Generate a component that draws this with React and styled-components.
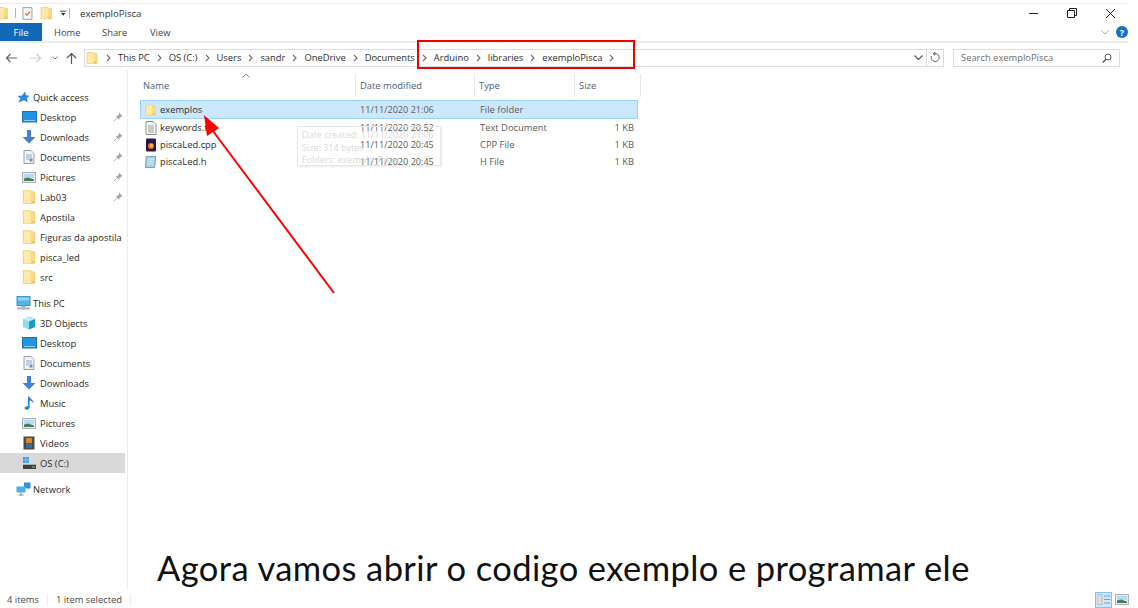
import React from "react";
import styled, { createGlobalStyle } from "styled-components";

const Global = createGlobalStyle`
  html, body { margin: 0; padding: 0; background: #fff; }
  body { font-family: "Open Sans", "Noto Sans", sans-serif; color: #2b2b2b; }
  #root { width: 1138px; height: 608px; overflow: hidden; }
`;

const Page = styled.div`
  position: relative;
  width: 1138px;
  height: 608px;
  display: flex;
  flex-direction: column;
  overflow: hidden;
  background: #fff;
`;
const Window = styled.div`
  width: 1128px;
  height: 608px;
  padding-top: 3px;
  box-sizing: border-box;
  display: flex;
  flex-direction: column;
`;
const TitleBar = styled.div`
  height: 19px;
  box-sizing: border-box;
  border-top: 1px solid #ececec;
  display: flex;
  align-items: center;
  font-size: 9.6px;
  color: #333;
`;
const QuickIcons = styled.div`
  display: flex;
  align-items: center;
  width: 75px;
  margin-left: -5px;
  gap: 6px;
  flex: none;
`;
const VBar = styled.span`
  width: 1px;
  height: 10px;
  background: #b5b5b5;
`;
const QuickCaret = styled.svg`
  margin-right: -3px;
`;
const TitleText = styled.span`
  margin-left: 10px;
  flex: 1;
`;
const WinButtons = styled.div`
  display: flex;
  gap: 28px;
  margin-right: 12px;
  align-items: center;
`;
const Ribbon = styled.div`
  height: 20px;
  margin-top: 1px;
  box-sizing: border-box;
  display: flex;
  align-items: stretch;
  border-bottom: 2px solid #ececec;
  font-size: 9.4px;
  color: #444;
`;
const FileTab = styled.div`
  width: 42px;
  background: #1368b8;
  color: #fff;
  display: flex;
  align-items: center;
  justify-content: center;
  font-weight: 500;
`;
const Tab = styled.div`
  display: flex;
  align-items: center;
  width: ${p => p.$w}px;
  padding-left: ${p => p.$pl}px;
  box-sizing: border-box;
`;
const RibbonRight = styled.div`
  margin-left: auto;
  display: flex;
  align-items: center;
  gap: 7px;
`;
const Help = styled.span`
  width: 12px;
  height: 12px;
  border-radius: 50%;
  background: #1272c8;
  color: #fff;
  font-size: 9px;
  font-weight: 700;
  display: flex;
  align-items: center;
  justify-content: center;
`;
const NavRow = styled.div`
  height: 27px;
  display: flex;
  align-items: center;
  padding-top: 2px;
  box-sizing: border-box;
`;
const NavButtons = styled.div`
  width: 84px;
  flex: none;
  display: flex;
  align-items: center;
  padding-left: 5px;
  box-sizing: border-box;
  gap: 11px;
`;
const DropCaret = styled.svg`
  margin: 0 -3px 0 -1px;
`;
const AddressBar = styled.div`
  width: 860px;
  flex: none;
  height: 18px;
  border: 1px solid #dcdcdc;
  box-sizing: border-box;
  display: flex;
  align-items: center;
  font-size: 9.4px;
  color: #2e2e2e;
`;
const Crumb = styled.span`
  margin-left: 7px;
  white-space: nowrap;
`;
const Chevron = styled.span`
  margin-left: 7px;
  display: inline-flex;
`;
const AddressEnd = styled.div`
  margin-left: auto;
  display: flex;
  align-items: center;
  height: 100%;
  gap: 3px;
  padding-right: 3px;
`;
const Divider = styled.span`
  width: 1px;
  height: 100%;
  background: #dcdcdc;
`;
const Search = styled.div`
  margin-left: 9px;
  width: 167px;
  height: 18px;
  border: 1px solid #dcdcdc;
  box-sizing: border-box;
  display: flex;
  align-items: center;
  justify-content: space-between;
  padding: 0 7px;
  font-size: 9.4px;
  color: #6d6d6d;
`;
const Main = styled.div`
  flex: 1;
  display: flex;
  min-height: 0;
`;
const Sidebar = styled.nav`
  width: 127px;
  flex: none;
  border-right: 1px solid #ececec;
  padding-top: 17px;
  font-size: 9.4px;
  color: #2a2a2a;
`;
const NavItem = styled.div`
  height: 20px;
  display: flex;
  align-items: center;
  position: relative;
  white-space: nowrap;
  padding-left: ${p => (p.$top ? 15 : 21)}px;
  margin-top: ${p => p.$gap || 0}px;
  background: ${p => (p.$active ? "#d9d9d9" : "transparent")};
  width: 125px;
  box-sizing: border-box;
`;
const NavIcon = styled.span`
  width: 16px;
  height: 16px;
  flex: none;
  margin-right: ${p => (p.$top ? 2 : 3)}px;
  display: flex;
  align-items: center;
  justify-content: center;
`;
const Pin = styled.span`
  position: absolute;
  right: 2px;
  top: 5px;
  display: flex;
`;
const Content = styled.section`
  flex: 1;
  padding: 3px 0 0 12px;
  position: relative;
`;
const SortCaret = styled.span`
  position: absolute;
  left: 114px;
  top: 3px;
  display: flex;
`;
const Header = styled.div`
  display: flex;
  height: 27px;
  padding: 1px 0 3px;
  box-sizing: border-box;
  font-size: 9.4px;
  color: #4c607a;
`;
const HeadCell = styled.div`
  width: ${p => p.$w}px;
  padding-left: ${p => p.$pl ?? 4}px;
  box-sizing: border-box;
  border-right: 1px solid #e8e8e8;
  display: flex;
  align-items: center;
`;
const FileRow = styled.div`
  width: 498px;
  height: ${p => p.$h}px;
  display: flex;
  align-items: center;
  box-sizing: border-box;
  font-size: 9.4px;
  color: #2e2e2e;
  background: ${p => (p.$sel ? "#cce8ff" : "transparent")};
  border: 1px solid ${p => (p.$sel ? "#99d1ff" : "transparent")};
`;
const FileName = styled.div`
  width: 219px;
  display: flex;
  align-items: center;
  padding-left: 3px;
  box-sizing: border-box;
  gap: 3px;
`;
const FileIcon = styled.span`
  width: 13px;
  height: 14px;
  flex: none;
  display: flex;
  align-items: center;
  justify-content: center;
`;
const DateCell = styled.div`
  width: 120px;
  font-size: 9.1px;
  color: #5c5c5c;
`;
const TypeCell = styled.div`
  width: 108px;
  color: #5c5c5c;
`;
const SizeCell = styled.div`
  width: 46px;
  text-align: right;
  color: #5c5c5c;
`;
const Status = styled.div`
  height: 18px;
  padding: 1px 0 0 7px;
  box-sizing: border-box;
  display: flex;
  align-items: center;
  font-size: 9.4px;
  color: #4a4a4a;
`;
const StatusSep = styled.span`
  width: 1px;
  height: 12px;
  background: #ececec;
  margin: 0 8px;
`;
const ViewIcons = styled.div`
  margin-left: auto;
  display: flex;
  align-items: center;
  gap: 3px;
  margin-right: -1px;
`;
const DetailsBtn = styled.span`
  width: 17px;
  height: 16px;
  background: #cce8ff;
  border: 1px solid #7cc4f5;
  box-sizing: border-box;
  display: flex;
  align-items: center;
  justify-content: center;
`;
const Tooltip = styled.div`
  position: absolute;
  left: 297px;
  top: 126px;
  width: 144px;
  height: 40px;
  box-sizing: border-box;
  border: 1px solid #e6e6e6;
  box-shadow: 1px 1px 2px rgba(0,0,0,.08);
  padding: 2px 4px;
  font-size: 9px;
  line-height: 12.5px;
  color: #dadada;
  white-space: nowrap;
  overflow: hidden;
`;
const RedBox = styled.div`
  position: absolute;
  left: 417px;
  top: 40px;
  width: 218px;
  height: 29px;
  box-sizing: border-box;
  border: 2px solid #f00000;
`;
const ArrowLayer = styled.svg`
  position: absolute;
  left: 195px;
  top: 110px;
`;
const Caption = styled.div`
  position: absolute;
  left: 157px;
  top: 546px;
  font-family: Lato, "Open Sans", sans-serif;
  font-size: 34.5px;
  letter-spacing: 0.4px;
  line-height: 44px;
  color: #111;
  white-space: nowrap;
`;

const Folder = ({ size = 16 }) => (
  <svg width={size} height={size} viewBox="0 0 14 14">
    <path d="M2 1.5h6.500l0 1H11.500a.5.5 0 0 1 .5.5v9.500H2z" fill="#fbdc86" stroke="#e7c363" strokeWidth=".6" />
    <path d="M2.500 2h6v9.500h3.200v.8H2.500z" fill="#fde9a9" />
    <rect x="9" y="10.500" width="3" height="2" fill="#eec75f" />
  </svg>
);
const DesktopIcon = () => (
  <svg width="15" height="12" viewBox="0 0 15 12">
    <rect x=".5" y=".5" width="14" height="10.500" fill="#1f93e6" stroke="#1872bd" />
    <path d="M2 9.500h11" stroke="#8fd0f8" />
  </svg>
);
const DownIcon = () => (
  <svg width="14" height="14" viewBox="0 0 14 14">
    <path d="M5 0h4v7h4.500L7 13.500.5 7H5z" fill="#3c83d3" />
  </svg>
);
const DocIcon = () => (
  <svg width="12" height="14" viewBox="0 0 12 14">
    <path d="M1 .5h7l3 3v10H1z" fill="#f2f3f5" stroke="#9a9fa6" />
    <path d="M3 5h6M3 7h6M3 9h3" stroke="#7eb3dc" />
    <rect x="6.500" y="8.500" width="3" height="3" fill="#7f8c9a" />
  </svg>
);
const PicIcon = () => (
  <svg width="14" height="11" viewBox="0 0 14 11">
    <rect x=".5" y=".5" width="13" height="10" fill="#e8edf1" stroke="#aab1b8" />
    <rect x="2" y="2" width="10" height="4" fill="#b9d9f1" />
    <path d="M2 9V6.500l4-1 6 2V9z" fill="#3f7e60" />
  </svg>
);
const PinIcon = () => (
  <svg width="10" height="10" viewBox="0 0 10 10">
    <path d="M6 .5l3.500 3.500-1.200.4-2 2 0 1.600L2.500 4.200l1.700-.1 1.900-2z" fill="#a2a6ab" />
    <path d="M3.600 6.400L.8 9.200" stroke="#a2a6ab" />
  </svg>
);
const StarIcon = () => (
  <svg width="13" height="12" viewBox="0 0 13 12">
    <path d="M8 .5l1 3.700 3.500.5-2.600 2.500.8 4.300L7 9.300 1.400 11.500l2-4L.5 5l4.600-.4z" fill="#2a8ae0" />
  </svg>
);
const PcIcon = () => (
  <svg width="15" height="14" viewBox="0 0 15 14">
    <rect x="1" y=".5" width="13" height="9" fill="#4db5ee" stroke="#3d95c9" />
    <rect x="2" y="1.500" width="11" height="3" fill="#8fd6f8" />
    <rect x="5.500" y="9.500" width="4" height="2" fill="#9aa8b2" />
    <rect x="1" y="11.500" width="13" height="2" fill="#a7b3bb" />
  </svg>
);
const CubeIcon = () => (
  <svg width="14" height="14" viewBox="0 0 14 14">
    <path d="M7 .5l6 2.500v8l-6 2.500z" fill="#1b9ac2" />
    <path d="M7 .5L1 3v8l6 2.500z" fill="#8edcec" />
    <path d="M7 .5l6 2.500-6 2.500L1 3z" fill="#c0eef6" />
  </svg>
);
const MusicIcon = () => (
  <svg width="11" height="14" viewBox="0 0 11 14">
    <path d="M4 .5h1.400c.3 2.500 4.600 3.400 4.100 7-.6-1.800-2.500-2.800-3.900-3.100V11.200c0 1.500-1.300 2.500-3 2.500-1.200 0-2-.6-2-1.500 0-1.200 1.500-2.200 3.400-2.100z" fill="#1f86e0" />
  </svg>
);
const VideoIcon = () => (
  <svg width="12" height="14" viewBox="0 0 12 14">
    <rect x=".5" y=".5" width="11" height="13" fill="#4a4a4a" />
    <rect x="3" y="2" width="6" height="5" fill="#d9882f" />
    <rect x="3" y="7.500" width="6" height="4.500" fill="#3b6aa8" />
  </svg>
);
const DriveIcon = () => (
  <svg width="15" height="14" viewBox="0 0 15 14">
    <rect x="1" y="1" width="2.700" height="2.700" fill="#2ba3e6" />
    <rect x="4.200" y="1" width="2.700" height="2.700" fill="#2ba3e6" />
    <rect x="1" y="4.200" width="2.700" height="2.700" fill="#2ba3e6" />
    <rect x="4.200" y="4.200" width="2.700" height="2.700" fill="#2ba3e6" />
    <rect x="1" y="9" width="13" height="4" fill="#3a3f42" />
    <rect x="1" y="8" width="13" height="1" fill="#a8adb0" />
    <rect x="10" y="10.500" width="3" height="1" fill="#74d66a" />
  </svg>
);
const NetIcon = () => (
  <svg width="15" height="14" viewBox="0 0 15 14">
    <rect x="8" y=".5" width="6.500" height="6" fill="#2f93da" />
    <rect x=".5" y="4.500" width="9" height="6" fill="#4db0ea" />
    <path d="M5 10.500v2.500M2.500 13h5" stroke="#7a8a96" />
  </svg>
);
const TextFile = () => (
  <svg width="12" height="14" viewBox="0 0 12 14">
    <path d="M1 .5h7l3 3v10H1z" fill="#fafafa" stroke="#8c8c8c" />
    <path d="M3 5h6M3 7h6M3 9h6M3 11h6" stroke="#9a9a9a" />
  </svg>
);
const CppFile = () => (
  <svg width="12" height="14" viewBox="0 0 12 14">
    <rect x="1" y=".5" width="10" height="13" rx="1" fill="#2b1648" />
    <circle cx="6" cy="8" r="3" fill="#f3702d" />
    <circle cx="6.500" cy="7.500" r="1.500" fill="#f8c93a" />
  </svg>
);
const HFile = () => (
  <svg width="14" height="14" viewBox="0 0 14 14">
    <path d="M2.500 1h10l-1 12H1.500z" fill="#a9d3e4" stroke="#6f97a8" />
    <path d="M4 4h7M4 6.500h6.500M3.500 9h7" stroke="#d8eef6" />
  </svg>
);
const Chev = ({ color = "#6d6d6d" }) => (
  <svg width="5" height="8" viewBox="0 0 5 8">
    <path d="M1 1l3 3-3 3" fill="none" stroke={color} strokeWidth="1.100" />
  </svg>
);

const crumbs = ["This PC", "OS (C:)", "Users", "sandr", "OneDrive", "Documents", "Arduino", "libraries", "exemploPisca"];

const quick = [
  ["Desktop", <DesktopIcon />, true],
  ["Downloads", <DownIcon />, true],
  ["Documents", <DocIcon />, true],
  ["Pictures", <PicIcon />, true],
  ["Lab03", <Folder />, true],
  ["Apostila", <Folder />],
  ["Figuras da apostila", <Folder />],
  ["pisca_led", <Folder />],
  ["src", <Folder />],
];
const pc = [
  ["3D Objects", <CubeIcon />],
  ["Desktop", <DesktopIcon />],
  ["Documents", <DocIcon />],
  ["Downloads", <DownIcon />],
  ["Music", <MusicIcon />],
  ["Pictures", <PicIcon />],
  ["Videos", <VideoIcon />],
  ["OS (C:)", <DriveIcon />, false, true],
];
const files = [
  ["exemplos", <Folder />, "11/11/2020 21:06", "File folder", "", 19, true],
  ["keywords.txt", <TextFile />, "11/11/2020 20:52", "Text Document", "1 KB", 17],
  ["piscaLed.cpp", <CppFile />, "11/11/2020 20:45", "CPP File", "1 KB", 17],
  ["piscaLed.h", <HFile />, "11/11/2020 20:45", "H File", "1 KB", 17],
];

export default function App() {
  return (
    <Page>
      <Global />
      <Window>
        <TitleBar>
          <QuickIcons>
            <Folder size={16} />
            <VBar />
            <svg width="12" height="15" viewBox="0 0 12 14">
              <path d="M1 .5h10v13H1z" fill="#f7f7f7" stroke="#9b9b9b" />
              <path d="M3.500 7l2 2 3.500-4" fill="none" stroke="#e0592b" strokeWidth="1.200" />
            </svg>
            <Folder size={16} />
            <QuickCaret width="7" height="7" viewBox="0 0 7 7">
              <path d="M0 1h7" stroke="#333" />
              <path d="M1 3h5L3.500 6z" fill="#333" />
            </QuickCaret>
            <VBar />
          </QuickIcons>
          <TitleText>exemploPisca</TitleText>
          <WinButtons>
            <svg width="10" height="10" viewBox="0 0 10 10"><path d="M0 5.500h9" stroke="#222" /></svg>
            <svg width="10" height="10" viewBox="0 0 10 10"><path d="M.5 2.500h7v7h-7zM2.500 2.500v-2h7v7h-2" fill="none" stroke="#222" /></svg>
            <svg width="11" height="11" viewBox="0 0 11 11"><path d="M1 1l9 9M10 1l-9 9" stroke="#222" /></svg>
          </WinButtons>
        </TitleBar>
        <Ribbon>
          <FileTab>File</FileTab>
          <Tab $w={49} $pl={12}>Home</Tab>
          <Tab $w={49} $pl={11}>Share</Tab>
          <Tab $w={49} $pl={10}>View</Tab>
          <RibbonRight>
            <svg width="8" height="5" viewBox="0 0 8 5"><path d="M.500.500L4 4 7.500.500" fill="none" stroke="#aaa" /></svg>
            <Help>?</Help>
          </RibbonRight>
        </Ribbon>
        <NavRow>
          <NavButtons>
            <svg width="13" height="10" viewBox="0 0 13 10"><path d="M12 5H1.500M5.500 1l-4 4 4 4" fill="none" stroke="#666" strokeWidth="1.200" /></svg>
            <svg width="13" height="10" viewBox="0 0 13 10"><path d="M1 5h10.500M7.500 1l4 4-4 4" fill="none" stroke="#cfcfcf" strokeWidth="1.200" /></svg>
            <DropCaret width="6" height="4" viewBox="0 0 6 4"><path d="M.500.500L3 3 5.500.500" fill="none" stroke="#777" /></DropCaret>
            <svg width="11" height="12" viewBox="0 0 11 12"><path d="M5.500 12V1.500M1 6l4.500-4.500L10 6" fill="none" stroke="#555" strokeWidth="1.200" /></svg>
          </NavButtons>
          <AddressBar>
            <Folder size={14} />
            {crumbs.map(c => (
              <React.Fragment key={c}>
                <Chevron><Chev /></Chevron>
                <Crumb>{c}</Crumb>
              </React.Fragment>
            ))}
            <Chevron><Chev /></Chevron>
            <AddressEnd>
              <svg width="9" height="6" viewBox="0 0 9 6"><path d="M.500.500l4 4 4-4" fill="none" stroke="#555" strokeWidth="1.200" /></svg>
              <Divider />
              <svg width="10" height="11" viewBox="0 0 10 11"><path d="M5 1.500A4 4 0 1 1 1.500 4M5 .200v3L3 1.700z" fill="none" stroke="#666" /></svg>
            </AddressEnd>
          </AddressBar>
          <Search>
            <span>Search exemploPisca</span>
            <svg width="10" height="10" viewBox="0 0 10 10"><circle cx="6" cy="4" r="3" fill="none" stroke="#555" /><path d="M4 6.200L.800 9.500" stroke="#555" strokeWidth="1.400" /></svg>
          </Search>
        </NavRow>
        <Main>
          <Sidebar>
            <NavItem $top><NavIcon $top><StarIcon /></NavIcon>Quick access</NavItem>
            {quick.map(([n, ic, pin]) => (
              <NavItem key={n}>
                <NavIcon>{ic}</NavIcon>{n}
                {pin && <Pin><PinIcon /></Pin>}
              </NavItem>
            ))}
            <NavItem $top $gap={6}><NavIcon $top><PcIcon /></NavIcon>This PC</NavItem>
            {pc.map(([n, ic, , active]) => (
              <NavItem key={n} $active={active}>
                <NavIcon>{ic}</NavIcon>{n}
              </NavItem>
            ))}
            <NavItem $top $gap={6}><NavIcon $top><NetIcon /></NavIcon>Network</NavItem>
          </Sidebar>
          <Content>
            <SortCaret>
              <svg width="8" height="5" viewBox="0 0 8 5"><path d="M.500 4.500L4 1l3.500 3.500" fill="none" stroke="#888" /></svg>
            </SortCaret>
            <Header>
              <HeadCell $w={216} $pl={3}>Name</HeadCell>
              <HeadCell $w={119}>Date modified</HeadCell>
              <HeadCell $w={100}>Type</HeadCell>
              <HeadCell $w={66}>Size</HeadCell>
            </Header>
            {files.map(([n, ic, d, t, s, h, sel]) => (
              <FileRow key={n} $h={h} $sel={sel}>
                <FileName><FileIcon>{ic}</FileIcon>{n}</FileName>
                <DateCell>{d}</DateCell>
                <TypeCell>{t}</TypeCell>
                <SizeCell>{s}</SizeCell>
              </FileRow>
            ))}
          </Content>
        </Main>
        <Status>
          <span>4 items</span>
          <StatusSep />
          <span>1 item selected</span>
          <StatusSep />
          <ViewIcons>
            <DetailsBtn>
              <svg width="13" height="11" viewBox="0 0 13 11">
                <rect x="0" y=".5" width="5" height="10" fill="#e6d9d2" stroke="#9aa7b0" strokeWidth=".6" />
                <path d="M7 2h6M7 5.500h6M7 9h6" stroke="#8a97a3" />
              </svg>
            </DetailsBtn>
            <PicIcon />
          </ViewIcons>
        </Status>
      </Window>
      <Tooltip>
        Date created: 11/11/2020 21:06<br />
        Size: 314 bytes<br />
        Folders: exemplo_Pisca
      </Tooltip>
      <RedBox />
      <ArrowLayer width="150" height="190" viewBox="0 0 150 190">
        <path d="M139 183L18 21" stroke="#f00" strokeWidth="2" fill="none" />
        <path d="M9 5l15 13-12 8z" fill="#f00" />
      </ArrowLayer>
      <Caption>Agora vamos abrir o codigo exemplo e programar ele</Caption>
    </Page>
  );
}
